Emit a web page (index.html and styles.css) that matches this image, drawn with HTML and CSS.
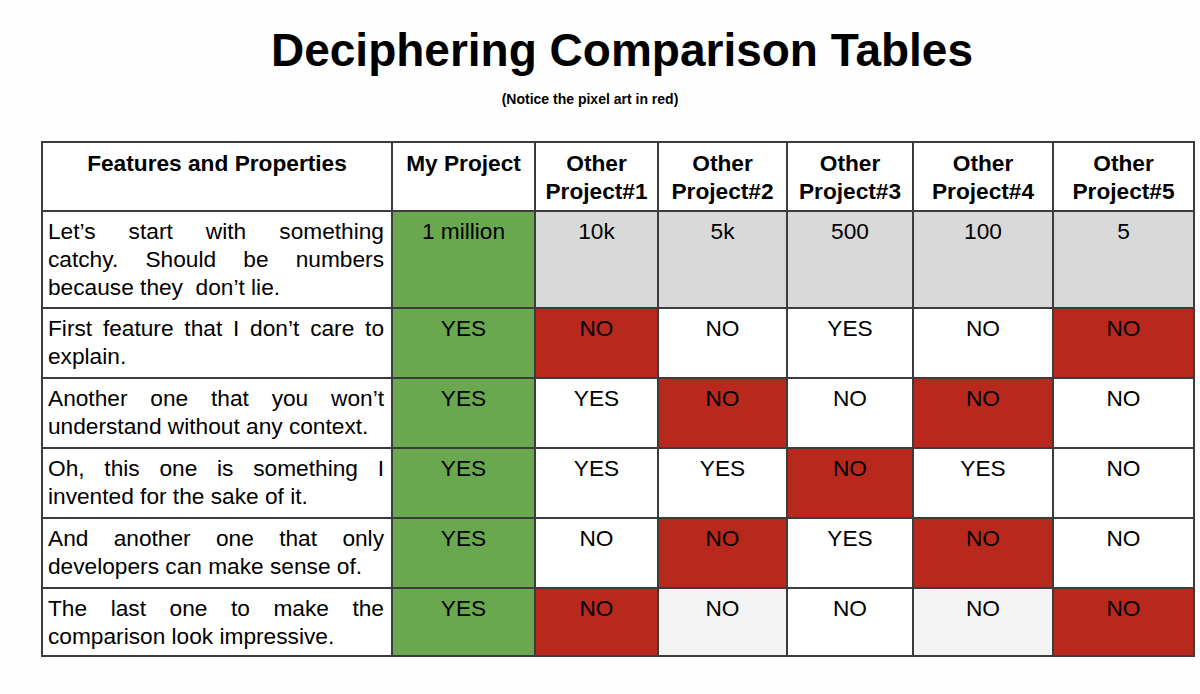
FILE: index.html
```html
<!DOCTYPE html>
<html>
<head>
<meta charset="utf-8">
<link rel="stylesheet" href="styles.css">
</head>
<body>
<div class="page">
  <h1 class="title">Deciphering Comparison Tables</h1>
  <p class="subtitle">(Notice the pixel art in red)</p>
  <table class="cmp">
    <colgroup>
      <col class="c-feat"><col class="c-mine"><col class="c-o1"><col class="c-o2"><col class="c-o3"><col class="c-o4"><col class="c-o5">
    </colgroup>
    <thead>
      <tr class="r-head">
        <th>Features and Properties</th>
        <th>My Project</th>
        <th>Other Project#1</th>
        <th>Other Project#2</th>
        <th>Other Project#3</th>
        <th>Other Project#4</th>
        <th>Other Project#5</th>
      </tr>
    </thead>
    <tbody>
      <tr class="r-tall">
        <td class="feat"><span class="jline">Let’s start with something</span> catchy. Should be numbers because they&nbsp; don’t lie.</td>
        <td class="green">1 million</td>
        <td class="gray">10k</td>
        <td class="gray">5k</td>
        <td class="gray">500</td>
        <td class="gray">100</td>
        <td class="gray">5</td>
      </tr>
      <tr class="r-std">
        <td class="feat">First feature that I don’t care to explain.</td>
        <td class="green">YES</td>
        <td class="red">NO</td>
        <td>NO</td>
        <td>YES</td>
        <td>NO</td>
        <td class="red">NO</td>
      </tr>
      <tr class="r-std">
        <td class="feat">Another one that you won’t understand without any context.</td>
        <td class="green">YES</td>
        <td>YES</td>
        <td class="red">NO</td>
        <td>NO</td>
        <td class="red">NO</td>
        <td>NO</td>
      </tr>
      <tr class="r-std">
        <td class="feat">Oh, this one is something I invented for the sake of it.</td>
        <td class="green">YES</td>
        <td>YES</td>
        <td>YES</td>
        <td class="red">NO</td>
        <td>YES</td>
        <td>NO</td>
      </tr>
      <tr class="r-std">
        <td class="feat">And another one that only developers can make sense of.</td>
        <td class="green">YES</td>
        <td>NO</td>
        <td class="red">NO</td>
        <td>YES</td>
        <td class="red">NO</td>
        <td>NO</td>
      </tr>
      <tr class="r-last">
        <td class="feat">The last one to make the comparison look impressive.</td>
        <td class="green">YES</td>
        <td class="red">NO</td>
        <td class="light">NO</td>
        <td>NO</td>
        <td class="light">NO</td>
        <td class="red">NO</td>
      </tr>
    </tbody>
  </table>
</div>
</body>
</html>
```

FILE: styles.css
```css
html, body {
  margin: 0;
  padding: 0;
  background: #fefefe;
}
body {
  font-family: "Liberation Sans", Arial, sans-serif;
  color: #000;
}
.page {
  width: 1152px;
  margin-left: 41px;
  padding-top: 27px;
}
.title {
  margin: 0;
  font-size: 46px;
  line-height: 46px;
  font-weight: bold;
  text-align: center;
  padding-left: 10px;
}
.subtitle {
  margin: 19px 0 0 0;
  font-size: 14px;
  line-height: 14px;
  font-weight: bold;
  text-align: center;
  padding-right: 54px;
}
.cmp {
  margin-top: 35px;
  border-collapse: collapse;
  table-layout: fixed;
  width: 1152px;
}
.c-feat { width: 350px; }
.c-mine { width: 143px; }
.c-o1 { width: 123px; }
.c-o2 { width: 129px; }
.c-o3 { width: 126px; }
.c-o4 { width: 140px; }
.c-o5 { width: 141px; }
.cmp th, .cmp td {
  border: 2px solid #3c3c3c;
  vertical-align: top;
  text-align: center;
  font-size: 22.7px;
  line-height: 28px;
  padding: 5px 5px 0 5px;
  background: #fff;
}
.cmp th {
  font-weight: bold;
  padding-top: 6px;
}
.r-head { height: 69px; }
.r-tall { height: 97px; }
.r-std { height: 70px; }
.r-last { height: 68px; }
.cmp td.feat {
  text-align: justify;
  padding-left: 5px;
  padding-right: 7px;
}
.jline {
  display: block;
  text-align: justify;
  text-align-last: justify;
}
.cmp td.green { background: #6aa84f; }
.cmp td.red { background: #b9281d; }
.cmp td.gray { background: #d9d9d9; }
.cmp td.light { background: #f3f3f3; }
```
